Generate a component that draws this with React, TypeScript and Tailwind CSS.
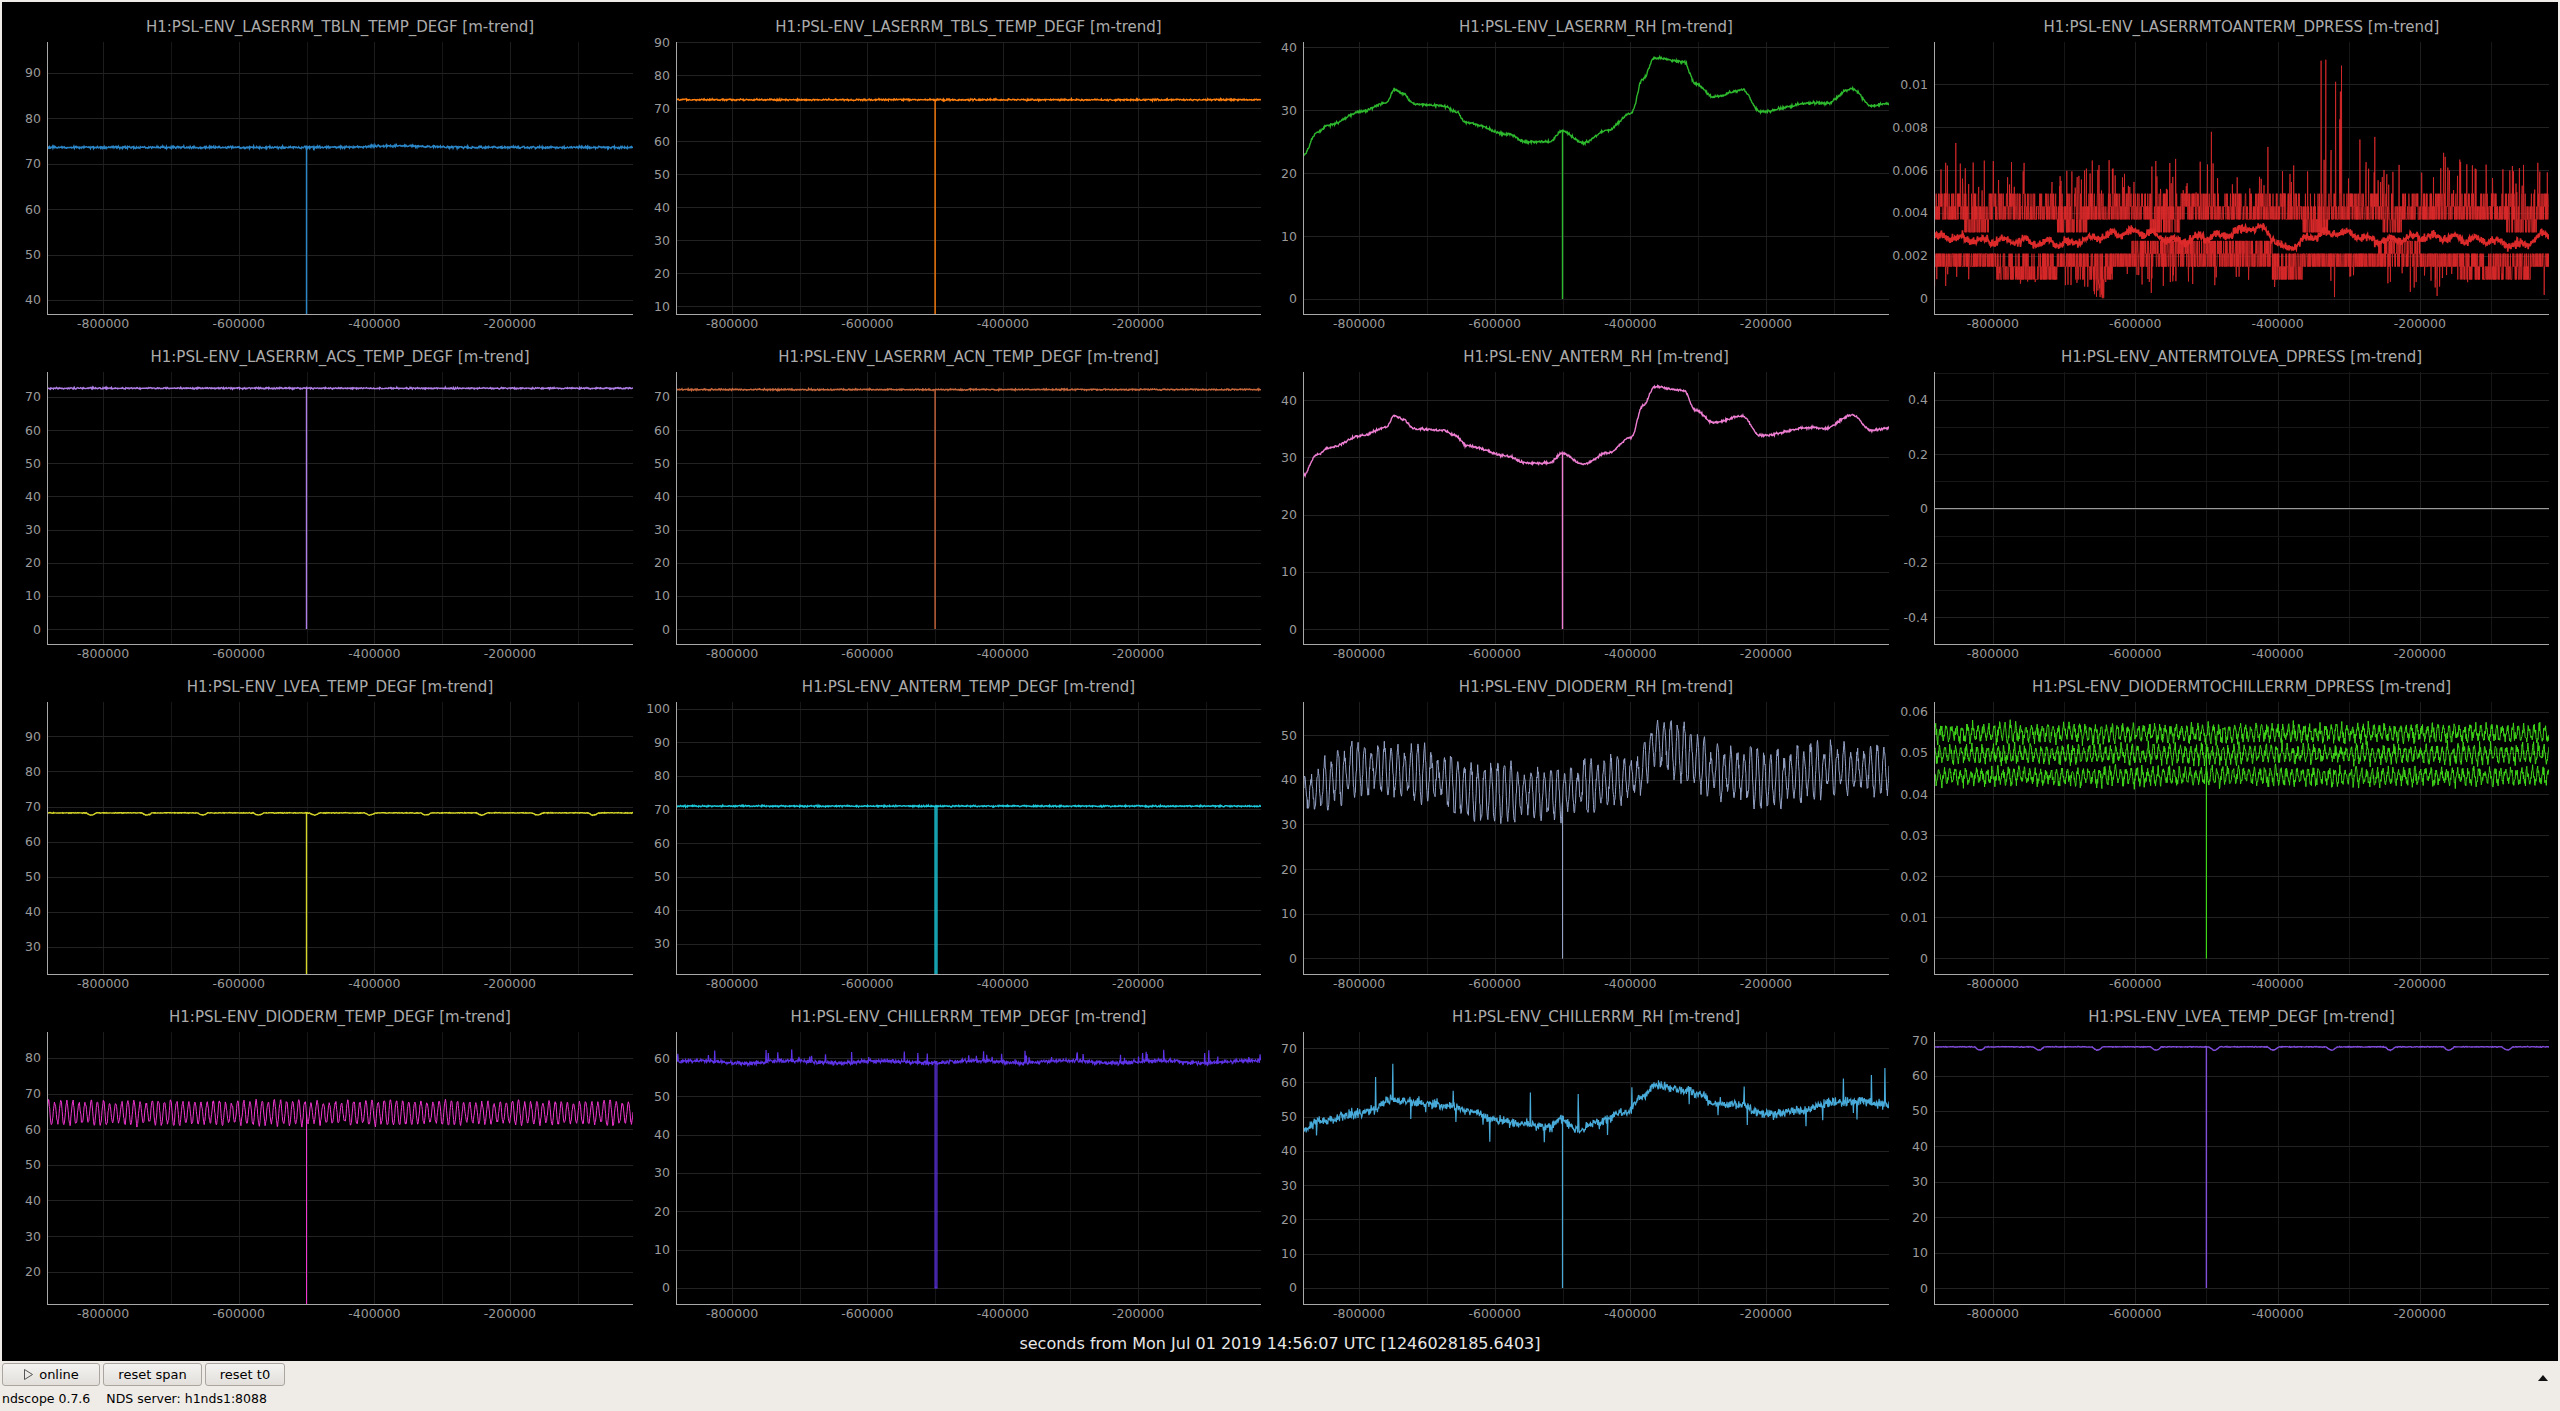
import React from "react"

type Pt = [number, number]

type Col = { w: number; left: number; plot: number; titleCls: string }

type Panel = {
  title: string
  color: string
  ymin: number
  ymax: number
  ticks: number[]
  minor?: number[]
  width?: number
  widths?: number[]
  traces: Pt[][]
}

// plot geometry (px)
const PH = 272
const XMIN = -882800
const XMAX = -18500
const FS = (-500000 - XMIN) / (XMAX - XMIN)

const COLS: Col[] = [
  { w: 653, left: 45, plot: 586, titleCls: "ml-[45px] w-[586px]" },
  { w: 627, left: 21, plot: 585, titleCls: "ml-[21px] w-[585px]" },
  { w: 628, left: 21, plot: 586, titleCls: "ml-[21px] w-[586px]" },
  { w: 648, left: 24, plot: 615, titleCls: "ml-[24px] w-[615px]" },
]

function rng(seed: number) {
  let a = seed * 7919 + 17
  return () => {
    a = (a + 0x6d2b79f5) | 0
    let t = Math.imul(a ^ (a >>> 15), 1 | a)
    t = (t + Math.imul(t ^ (t >>> 7), 61 | t)) ^ t
    return ((t ^ (t >>> 14)) >>> 0) / 4294967296
  }
}

function interp(pts: Pt[], f: number) {
  for (let i = 1; i < pts.length; i++) {
    if (f <= pts[i][0]) {
      const [x0, y0] = pts[i - 1]
      const [x1, y1] = pts[i]
      const t = (f - x0) / (x1 - x0 || 1)
      const s = (1 - Math.cos(t * Math.PI)) / 2
      return y0 + (y1 - y0) * s
    }
  }
  return pts[pts.length - 1][1]
}

function gen(n: number, fn: (f: number) => number): Pt[] {
  const out: Pt[] = []
  for (let i = 0; i < n; i++) {
    const f = i / (n - 1)
    out.push([f, fn(f)])
  }
  return out
}

function spike(pts: Pt[], to = 0, at = FS, w = 0): Pt[] {
  const k = pts.findIndex((p) => p[0] >= at)
  const v = pts[k][1]
  const ins: Pt[] = [
    [at, v],
    [at, to],
    [at + w, to],
    [at + w, v],
  ]
  return [...pts.slice(0, k), ...ins, ...pts.slice(k)]
}

// relative humidity shape shared by the RH channels
const RH: Pt[] = [
  [0, 26.8], [0.024, 30.5], [0.045, 31.7], [0.1, 33.8], [0.142, 35.2], [0.156, 37.3],
  [0.17, 36.7], [0.19, 35], [0.24, 34.7], [0.26, 33.8], [0.28, 32], [0.35, 30.2],
  [0.38, 29], [0.42, 29], [0.443, 30.7], [0.477, 28.8], [0.52, 30.8], [0.56, 33.5],
  [0.58, 39], [0.6, 42.3], [0.65, 41.7], [0.67, 38.2], [0.7, 36.1], [0.75, 37.2],
  [0.78, 33.8], [0.87, 35.2], [0.89, 35], [0.937, 37.4], [0.97, 34.7], [1, 35.1],
]

const DIO: Pt[] = [
  [0, 37], [0.1, 42.5], [0.2, 41.5], [0.3, 37], [0.44, 37], [0.5, 39], [0.57, 40.5],
  [0.6, 48], [0.65, 46], [0.7, 42], [0.75, 41], [0.8, 40], [0.9, 42.5], [1, 42],
]

const CHRH: Pt[] = [
  [0, 46], [0.03, 49], [0.1, 51], [0.12, 52], [0.15, 55], [0.2, 54], [0.25, 53],
  [0.3, 51], [0.32, 49], [0.37, 48], [0.42, 47], [0.44, 49], [0.47, 46], [0.5, 48],
  [0.55, 51], [0.58, 56], [0.6, 59], [0.65, 58], [0.68, 56], [0.7, 54], [0.75, 53.5],
  [0.78, 51], [0.8, 51], [0.85, 52], [0.9, 54], [0.95, 54.5], [1, 53.5],
]

function nz(r: () => number) {
  return r() + r() + r() - 1.5
}

function flat(seed: number, base: number, amp: number, n = 1100): Pt[] {
  const r = rng(seed)
  return spike(gen(n, () => base + nz(r) * amp))
}

function scallop(seed: number, base: number, depth: number): Pt[] {
  const r = rng(seed)
  return spike(
    gen(1000, (f) => {
      const ph = (f * 10.5 + 0.3) % 1
      const d = ph < 0.18 ? Math.sin((ph / 0.18) * Math.PI) : 0
      return base - depth * d + nz(r) * 0.1
    })
  )
}

function inAny(f: number, ranges: number[][]) {
  return ranges.some(([a, b]) => f >= a && f <= b)
}

function dpressLaser(): Pt[][] {
  const r = rng(44)
  const meanShape: Pt[] = [
    [0, 0.0029], [0.1, 0.0027], [0.2, 0.0026], [0.33, 0.0031], [0.4, 0.0027], [0.45, 0.0029],
    [0.53, 0.0033], [0.57, 0.0024], [0.63, 0.003], [0.66, 0.0031], [0.72, 0.0027], [0.8, 0.0029],
    [0.9, 0.0027], [0.95, 0.0025], [1, 0.003],
  ]
  const mean = gen(1600, (f) => interp(meanShape, f) + 0.00012 * Math.sin(f * 180) + nz(r) * 0.0002)
  const lowUp = [[0.2, 0.25], [0.35, 0.4], [0.6, 0.64], [0.73, 0.76], [0.93, 0.98], [0.05, 0.09]]
  const max = gen(2200, (f) => {
    const k = r()
    let v = k < 0.45 ? 0.0037 : k < 0.8 ? 0.0043 : 0.0049
    if (inAny(f, lowUp) && r() < 0.4) v = 0.0031
    const hot = f > 0.615 && f < 0.665
    if (r() < (hot ? 0.1 : 0.06)) v = 0.0049 + r() * (hot ? 0.0066 : 0.0016)
    else if (r() < 0.012) v = 0.0055 + r() * 0.0025
    return v
  })
  const minUp = [[0.32, 0.55], [0.72, 0.79]]
  const minDn = [[0.1, 0.2], [0.23, 0.29], [0.55, 0.6], [0.85, 0.97]]
  const min = gen(2200, (f) => {
    let v = r() < 0.5 ? 0.0015 : 0.0021
    if (inAny(f, minUp) && r() < 0.35) v = 0.0027
    if (inAny(f, minDn) && r() < 0.35) v = 0.0009
    if (f > 0.26 && f < 0.28 && r() < 0.4) v = r() * 0.0008
    else if (r() < 0.03) v = 0.0005 + r() * 0.0007
    else if (r() < 0.004) v = r() * 0.0004
    return v
  })
  return [max, min, mean]
}

function dpressDiode(): Pt[][] {
  const r = rng(12)
  const band = (base: number, ph: number) =>
    gen(1800, (f) => base + (0.0012 + r() * 0.0008) * Math.sin(f * Math.PI * 2 * 115 + ph) + nz(r) * 0.0012)
  return [band(0.0548, 0), spike(band(0.0497, 1.3)), band(0.0443, 2.1)]
}

function dioRh(): Pt[] {
  const r = rng(11)
  let amp = 5
  let last = -1
  return spike(
    gen(1500, (f) => {
      const cyc = Math.floor(f * 88)
      if (cyc !== last) {
        last = cyc
        amp = 3.2 + r() * 3.4
      }
      const s = Math.sin(f * Math.PI * 2 * 88)
      return interp(DIO, f) + amp * s + nz(r) * 1.3
    })
  )
}

function dioTemp(): Pt[] {
  const r = rng(13)
  let amp = 3
  let last = -1
  return spike(
    gen(1500, (f) => {
      const cyc = Math.floor(f * 96)
      if (cyc !== last) {
        last = cyc
        amp = 2.6 + r() * 1.0
      }
      const s = Math.sin(f * Math.PI * 2 * 96)
      const v = 64.6 + amp * s + nz(r) * 0.5
      return Math.min(v, 68.2 + r() * 0.3)
    })
  )
}

function chillTemp(): Pt[] {
  const r = rng(14)
  const pts = gen(1300, (f) => {
    let v = 59 + nz(r) * 0.5 + 0.3 * Math.sin(f * 40)
    if (r() < 0.035) v += 1 + r() * 2.4
    else if (r() < 0.012) v -= 1 - r()
    return v
  })
  return spike(pts, 0, FS, 0.003)
}

function chillRh(): Pt[] {
  const r = rng(15)
  return spike(
    gen(1300, (f) => {
      let v = interp(CHRH, f) + nz(r) * 1.4
      if (r() < 0.018) v += 4 + r() * 9
      else if (r() < 0.012) v -= 3 + r() * 3
      return v
    })
  )
}

const PANELS: Panel[] = [
  {
    title: "H1:PSL-ENV_LASERRM_TBLN_TEMP_DEGF [m-trend]",
    color: "#2b86c8",
    ymin: 36.9,
    ymax: 96.8,
    ticks: [40, 50, 60, 70, 80, 90],
    width: 1.4,
    traces: [
      spike(
        (() => {
          const r = rng(1)
          return gen(1200, (f) => 73.6 + 0.35 * Math.exp(-(((f - 0.6) / 0.06) ** 2)) + nz(r) * 0.25)
        })()
      ),
    ],
  },
  {
    title: "H1:PSL-ENV_LASERRM_TBLS_TEMP_DEGF [m-trend]",
    color: "#ff7f0e",
    ymin: 7.7,
    ymax: 90.1,
    ticks: [10, 20, 30, 40, 50, 60, 70, 80, 90],
    width: 1.4,
    traces: [flat(2, 72.6, 0.25)],
  },
  {
    title: "H1:PSL-ENV_LASERRM_RH [m-trend]",
    color: "#2eb82e",
    ymin: -2.4,
    ymax: 40.86,
    ticks: [0, 10, 20, 30, 40],
    width: 1.4,
    traces: [
      spike(
        (() => {
          const r = rng(3)
          return gen(1100, (f) => interp(RH, f) - 4 + nz(r) * 0.22)
        })()
      ),
    ],
  },
  {
    title: "H1:PSL-ENV_LASERRMTOANTERM_DPRESS [m-trend]",
    color: "#dc2a2b",
    ymin: -0.00071,
    ymax: 0.01197,
    ticks: [0, 0.002, 0.004, 0.006, 0.008, 0.01],
    widths: [0.8, 0.8, 1.7],
    traces: dpressLaser(),
  },
  {
    title: "H1:PSL-ENV_LASERRM_ACS_TEMP_DEGF [m-trend]",
    color: "#b07fe6",
    ymin: -4.5,
    ymax: 77.5,
    ticks: [0, 10, 20, 30, 40, 50, 60, 70],
    width: 1.4,
    traces: [flat(5, 72.6, 0.22)],
  },
  {
    title: "H1:PSL-ENV_LASERRM_ACN_TEMP_DEGF [m-trend]",
    color: "#c8673c",
    ymin: -4.5,
    ymax: 77.5,
    ticks: [0, 10, 20, 30, 40, 50, 60, 70],
    width: 1.4,
    traces: [flat(6, 72.2, 0.22)],
  },
  {
    title: "H1:PSL-ENV_ANTERM_RH [m-trend]",
    color: "#ee7ed2",
    ymin: -2.6,
    ymax: 44.9,
    ticks: [0, 10, 20, 30, 40],
    width: 1.4,
    traces: [
      spike(
        (() => {
          const r = rng(7)
          return gen(1100, (f) => interp(RH, f) + nz(r) * 0.2)
        })()
      ),
    ],
  },
  {
    title: "H1:PSL-ENV_ANTERMTOLVEA_DPRESS [m-trend]",
    color: "#9a9a9a",
    ymin: -0.499,
    ymax: 0.503,
    ticks: [-0.4, -0.2, 0, 0.2, 0.4],
    minor: [-0.3, -0.1, 0.1, 0.3, 0.5],
    traces: [
      [
        [0, 0],
        [1, 0],
      ],
    ],
  },
  {
    title: "H1:PSL-ENV_LVEA_TEMP_DEGF [m-trend]",
    color: "#d6d62a",
    ymin: 22.3,
    ymax: 99.8,
    ticks: [30, 40, 50, 60, 70, 80, 90],
    width: 1.4,
    traces: [scallop(9, 68.2, 0.6)],
  },
  {
    title: "H1:PSL-ENV_ANTERM_TEMP_DEGF [m-trend]",
    color: "#1cc6d8",
    ymin: 21,
    ymax: 102,
    ticks: [30, 40, 50, 60, 70, 80, 90, 100],
    width: 1.4,
    traces: [
      spike(
        (() => {
          const r = rng(10)
          return gen(1100, () => 71 + nz(r) * 0.22)
        })(),
        0,
        FS,
        0.003
      ),
    ],
  },
  {
    title: "H1:PSL-ENV_DIODERM_RH [m-trend]",
    color: "#94a2c6",
    ymin: -3.5,
    ymax: 57.4,
    ticks: [0, 10, 20, 30, 40, 50],
    traces: [dioRh()],
  },
  {
    title: "H1:PSL-ENV_DIODERMTOCHILLERRM_DPRESS [m-trend]",
    color: "#3fd81a",
    ymin: -0.0038,
    ymax: 0.0624,
    ticks: [0, 0.01, 0.02, 0.03, 0.04, 0.05, 0.06],
    traces: dpressDiode(),
  },
  {
    title: "H1:PSL-ENV_DIODERM_TEMP_DEGF [m-trend]",
    color: "#f036d0",
    ymin: 10.9,
    ymax: 87.3,
    ticks: [20, 30, 40, 50, 60, 70, 80],
    traces: [dioTemp()],
  },
  {
    title: "H1:PSL-ENV_CHILLERRM_TEMP_DEGF [m-trend]",
    color: "#5e32e6",
    ymin: -4.2,
    ymax: 66.8,
    ticks: [0, 10, 20, 30, 40, 50, 60],
    width: 1.2,
    traces: [chillTemp()],
  },
  {
    title: "H1:PSL-ENV_CHILLERRM_RH [m-trend]",
    color: "#48aad9",
    ymin: -4.7,
    ymax: 74.7,
    ticks: [0, 10, 20, 30, 40, 50, 60, 70],
    width: 1.2,
    traces: [chillRh()],
  },
  {
    title: "H1:PSL-ENV_LVEA_TEMP_DEGF [m-trend]",
    color: "#814ddb",
    ymin: -4.5,
    ymax: 72.3,
    ticks: [0, 10, 20, 30, 40, 50, 60, 70],
    width: 1.4,
    traces: [scallop(16, 68.1, 0.9)],
  },
]

const XTICKS = [-800000, -600000, -400000, -200000]
const XGRID = [-800000, -700000, -600000, -500000, -400000, -300000, -200000, -100000]

function fx(x: number) {
  return (x - XMIN) / (XMAX - XMIN)
}

function Plot({ p, c, idx }: { p: Panel; c: Col; idx: number }) {
  const sx = (f: number) => c.left + f * c.plot
  const sy = (v: number) => ((p.ymax - v) / (p.ymax - p.ymin)) * PH
  const path = (pts: Pt[]) =>
    pts.map((q, i) => `${i ? "L" : "M"}${sx(q[0]).toFixed(1)} ${sy(q[1]).toFixed(1)}`).join("")
  const right = c.left + c.plot

  return (
    <div className="flex flex-col h-[330px]">
      <div
        className={`${c.titleCls} h-[40px] pt-[15px] text-center text-[15px] leading-[20px] text-[#ababab] whitespace-nowrap`}
      >
        {p.title}
      </div>
      <svg width={c.w} height={290} className="overflow-visible block">
        <defs>
          <clipPath id={`clip${idx}`}>
            <rect x={c.left} y={0} width={c.plot} height={PH} />
          </clipPath>
        </defs>
        {XGRID.map((x) => (
          <line
            key={x}
            x1={Math.round(sx(fx(x))) + 0.5}
            x2={Math.round(sx(fx(x))) + 0.5}
            y1={0}
            y2={PH}
            stroke={XTICKS.includes(x) ? "#1d1d1d" : "#161616"}
          />
        ))}
        {(p.minor ?? []).map((v) => (
          <line key={"m" + v} x1={c.left} x2={right} y1={Math.round(sy(v)) + 0.5} y2={Math.round(sy(v)) + 0.5} stroke="#171717" />
        ))}
        {p.ticks.map((v) => (
          <line key={v} x1={c.left} x2={right} y1={Math.round(sy(v)) + 0.5} y2={Math.round(sy(v)) + 0.5} stroke="#222222" />
        ))}
        <g clipPath={`url(#clip${idx})`} fill="none" stroke={p.color}>
          {p.traces.map((t, i) => (
            <path key={i} d={path(t)} strokeWidth={p.widths?.[i] ?? p.width ?? 1} />
          ))}
        </g>
        <line x1={c.left + 0.5} x2={c.left + 0.5} y1={0} y2={PH + 1} stroke="#a8a8a8" />
        <line x1={c.left} x2={right} y1={PH + 0.5} y2={PH + 0.5} stroke="#a8a8a8" />
        <g fill="#9a9a9a" fontFamily="'DejaVu Sans', sans-serif" fontSize={12.5}>
          {p.ticks.map((v) => (
            <text key={v} x={c.left - 6} y={sy(v) + 4.5} textAnchor="end">
              {String(v)}
            </text>
          ))}
          {XTICKS.map((x) => (
            <text key={x} x={sx(fx(x))} y={PH + 14} textAnchor="middle">
              {String(x)}
            </text>
          ))}
        </g>
      </svg>
    </div>
  )
}

function Btn({ children, cls }: { children: React.ReactNode; cls: string }) {
  return (
    <button
      className={`${cls} h-[23px] flex items-center justify-center gap-[5px] rounded-[3px] border border-[#aaa59f] bg-gradient-to-b from-[#f4f3f1] to-[#e2dfdb] text-[13px] text-black`}
    >
      {children}
    </button>
  )
}

export default function App() {
  return (
    <div className="w-[2560px] h-[1411px] bg-[#efebe7] flex flex-col overflow-hidden font-['DejaVu_Sans',sans-serif]">
      <div className="mx-[2px] mt-[2px] h-[1359px] bg-black flex flex-col">
        <div className="grid grid-cols-[653px_627px_628px_648px]">
          {PANELS.map((p, i) => (
            <Plot key={i} p={p} c={COLS[i % 4]} idx={i} />
          ))}
        </div>
        <div className="pt-[12px] text-center text-[16px] leading-[20px] text-[#e6e6e6]">
          seconds from Mon Jul 01 2019 14:56:07 UTC [1246028185.6403]
        </div>
      </div>
      <div className="flex items-start justify-between pl-[2px] pr-[12px] pt-[2px]">
        <div className="flex gap-[3px]">
          <Btn cls="w-[98px]">
            <svg width="11" height="13" viewBox="0 0 11 13">
              <path d="M1.5 1.5 L9.5 6.5 L1.5 11.5 Z" fill="none" stroke="#555" strokeWidth="1" />
            </svg>
            <span>online</span>
          </Btn>
          <Btn cls="w-[99px]">reset span</Btn>
          <Btn cls="w-[80px]">reset t0</Btn>
        </div>
        <svg width="10" height="6" viewBox="0 0 10 6" className="mt-[12px]">
          <path d="M0 6 L5 0 L10 6 Z" fill="#111" />
        </svg>
      </div>
      <div className="mt-[5px] pl-[2px] flex gap-[16px] text-[12.5px] leading-[16px] text-black">
        <span>ndscope 0.7.6</span>
        <span>NDS server: h1nds1:8088</span>
      </div>
    </div>
  )
}
